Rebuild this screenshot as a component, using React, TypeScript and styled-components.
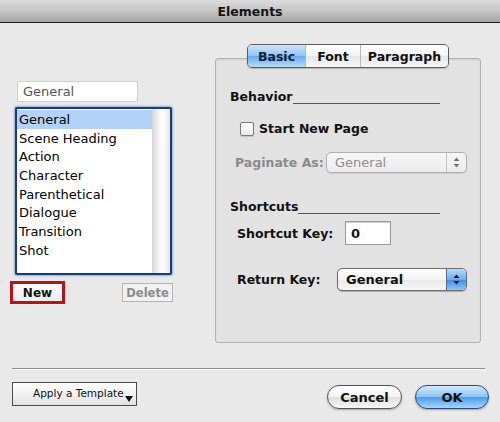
import styled, { createGlobalStyle, css } from 'styled-components'

const GlobalStyle = createGlobalStyle`
  html, body {
    margin: 0;
    padding: 0;
  }

  body {
    background: #e9e9e9;
    font-family: 'DejaVu Sans', 'Liberation Sans', sans-serif;
    color: #111;
  }
`

const Window = styled.div`
  width: 500px;
  height: 422px;
  display: flex;
  flex-direction: column;
  background: #e9e9e9;
  overflow: hidden;
`

const TitleBar = styled.div`
  flex: none;
  height: 22px;
  display: flex;
  align-items: center;
  justify-content: center;
  background: linear-gradient(#dcdcdc, #c4c4c4 50%, #a6a6a6);
  border-bottom: 1px solid #1c1c1c;
  font-size: 12.5px;
  font-weight: bold;
  color: #141414;
`

const Main = styled.div`
  flex: none;
  height: 345px;
  display: flex;
  align-items: flex-start;
`

const LeftColumn = styled.div`
  width: 163px;
  margin-left: 10px;
  padding-top: 58px;
  display: flex;
  flex-direction: column;
`

const NameField = styled.div`
  box-sizing: border-box;
  width: 121px;
  height: 21px;
  margin-left: 7px;
  padding-left: 5px;
  display: flex;
  align-items: center;
  background: #fff;
  border: 1px solid #d0d0d0;
  font-size: 13px;
  color: #555;
`

const List = styled.div`
  box-sizing: border-box;
  width: 157px;
  height: 168px;
  margin: 5px 0 0 5px;
  display: flex;
  background: #fff;
  border: 2px solid #1d3b72;
  border-radius: 2px;
  box-shadow: 0 0 2px 1px #8fb1dc;
`

const ListItems = styled.div`
  flex: 1;
  padding-top: 1px;
  display: flex;
  flex-direction: column;
`

const ListRow = styled.div<{ $selected?: boolean }>`
  height: 18.7px;
  padding-left: 2px;
  display: flex;
  align-items: center;
  font-size: 13px;
  color: #000;
  background: ${(p) => (p.$selected ? '#b3d2f7' : 'transparent')};
`

const ScrollTrack = styled.div`
  width: 18px;
  background: linear-gradient(90deg, #d6d6d6, #f2f2f2 35%, #ffffff 60%, #e6e6e6);
`

const ListButtons = styled.div`
  margin-top: 6px;
  display: flex;
  align-items: center;
  justify-content: space-between;
`

const NewButton = styled.button`
  box-sizing: border-box;
  width: 55px;
  height: 23px;
  padding: 0;
  border: 3px solid #b1161f;
  background: linear-gradient(#ffffff, #ececec);
  font-family: inherit;
  font-size: 12px;
  font-weight: bold;
  color: #111;
`

const DeleteButton = styled.button`
  box-sizing: border-box;
  width: 51px;
  height: 19px;
  padding: 0;
  border: 1px solid #b4b4b4;
  background: #f1f1f1;
  font-family: inherit;
  font-size: 11.5px;
  font-weight: bold;
  color: #8c8c8c;
`

const GroupBox = styled.div`
  box-sizing: border-box;
  width: 266px;
  height: 285px;
  margin: 35px 0 0 42px;
  display: flex;
  flex-direction: column;
  background: #e2e2e2;
  border: 1px solid #b2b2b2;
  border-radius: 3px;
  box-shadow: inset 0 1px 2px rgba(0, 0, 0, 0.08);
`

const Tabs = styled.div`
  align-self: center;
  margin-top: -15px;
  display: flex;
  height: 22px;
  border: 1px solid #5c5c5c;
  border-radius: 5px;
  overflow: hidden;
  box-shadow: 0 1px 1px rgba(0, 0, 0, 0.2);
`

const Tab = styled.div<{ $width: number; $active?: boolean }>`
  box-sizing: border-box;
  width: ${(p) => p.$width}px;
  display: flex;
  align-items: center;
  justify-content: center;
  font-size: 12.5px;
  font-weight: bold;
  color: #111;
  background: linear-gradient(#ffffff, #f3f3f3 50%, #e6e6e6 51%, #f7f7f7);

  & + & {
    border-left: 1px solid #b8b8b8;
  }

  ${(p) =>
    p.$active &&
    css`
      color: #0d1e3a;
      background: linear-gradient(#cfe5fc, #92c2f2 50%, #6aa9ec 51%, #b5dcfb);
    `}
`

const SectionHeader = styled.div<{ $top: number }>`
  height: 16px;
  margin: ${(p) => p.$top}px 40px 0 14px;
  display: flex;
  align-items: flex-end;
`

const SectionLabel = styled.span`
  font-size: 12.5px;
  font-weight: bold;
  line-height: 16px;
`

const Rule = styled.div`
  flex: 1;
  height: 0;
  border-bottom: 1px solid #555;
  margin-bottom: 1px;
`

const Row = styled.div<{ $top: number; $indent: number }>`
  margin: ${(p) => p.$top}px 0 0 ${(p) => p.$indent}px;
  display: flex;
  align-items: center;
`

const Label = styled.span<{ $width?: number; $muted?: boolean }>`
  ${(p) => p.$width !== undefined && `width: ${p.$width}px;`}
  flex: none;
  font-size: 12.5px;
  font-weight: bold;
  color: ${(p) => (p.$muted ? '#8a8a8a' : '#111')};
`

const CheckBox = styled.span`
  box-sizing: border-box;
  width: 14px;
  height: 14px;
  margin-right: 5px;
  border: 1px solid #7a7a7a;
  border-radius: 2px;
  background: linear-gradient(#ffffff, #e8e8e8);
  box-shadow: 0 1px 1px rgba(0, 0, 0, 0.15);
`

const PopUp = styled.div<{ $width: number; $height: number; $active?: boolean }>`
  box-sizing: border-box;
  width: ${(p) => p.$width}px;
  height: ${(p) => p.$height}px;
  display: flex;
  border: 1px solid ${(p) => (p.$active ? '#6d6d6d' : '#b0b0b0')};
  border-radius: 5px;
  overflow: hidden;
  background: ${(p) =>
    p.$active
      ? 'linear-gradient(#ffffff, #f4f4f4 50%, #e9e9e9 51%, #f6f6f6)'
      : 'linear-gradient(#f6f6f6, #ececec)'};
  box-shadow: 0 1px 1px rgba(0, 0, 0, ${(p) => (p.$active ? 0.25 : 0.1)});
`

const PopUpText = styled.span<{ $active?: boolean }>`
  flex: 1;
  padding-left: 8px;
  display: flex;
  align-items: center;
  font-size: 13px;
  font-weight: ${(p) => (p.$active ? 'bold' : 'normal')};
  color: ${(p) => (p.$active ? '#111' : '#8d8d8d')};
`

const PopUpArrows = styled.span<{ $active?: boolean }>`
  width: 19px;
  display: flex;
  align-items: center;
  justify-content: center;
  border-left: 1px solid ${(p) => (p.$active ? '#4a6e9e' : '#c4c4c4')};
  background: ${(p) =>
    p.$active ? 'linear-gradient(#b9dafb, #6fadee 50%, #3d8be2 51%, #8cc6f8)' : 'transparent'};
`

const KeyField = styled.div`
  box-sizing: border-box;
  width: 46px;
  height: 24px;
  padding-left: 5px;
  display: flex;
  align-items: center;
  background: #fff;
  border: 1px solid #9a9a9a;
  box-shadow: inset 0 1px 1px rgba(0, 0, 0, 0.2);
  font-size: 13px;
  font-weight: bold;
`

const Separator = styled.div`
  height: 1px;
  margin: 0 15px 0 12px;
  background: #8e8e8e;
  border-bottom: 1px solid #f7f7f7;
`

const Footer = styled.div`
  margin-top: 12px;
  padding: 0 11px 0 12px;
  display: flex;
  align-items: flex-start;
`

const TemplateButton = styled.div`
  box-sizing: border-box;
  width: 125px;
  height: 24px;
  padding: 0 3px 3px 20px;
  display: flex;
  align-items: center;
  justify-content: space-between;
  border: 1px solid #4a4a4a;
  background: linear-gradient(#ffffff, #f1f1f1 50%, #e2e2e2);
  font-size: 10.5px;
  color: #111;

  svg {
    align-self: flex-end;
  }
`

const Spacer = styled.div`
  flex: 1;
`

const PillButton = styled.button<{ $width: number; $primary?: boolean }>`
  box-sizing: border-box;
  width: ${(p) => p.$width}px;
  height: 24px;
  margin-top: 3px;
  padding: 0;
  border-radius: 12px;
  border: 1px solid ${(p) => (p.$primary ? '#2a4a7d' : '#555')};
  background: ${(p) =>
    p.$primary
      ? 'linear-gradient(#d3e8fd, #8ec3f4 48%, #4f9be9 52%, #a6d6fc)'
      : 'linear-gradient(#ffffff, #f3f3f3 48%, #dedede 52%, #f7f7f7)'};
  box-shadow: 0 1px 2px rgba(0, 0, 0, 0.3);
  font-family: inherit;
  font-size: 13px;
  font-weight: bold;
  color: #111;

  & + & {
    margin-left: 13px;
  }
`

function Arrows({ color }: { color: string }) {
  return (
    <svg width="7" height="11" viewBox="0 0 7 11">
      <path d="M3.5 0.5 L6.5 4 L0.5 4 Z" fill={color} />
      <path d="M0.5 7 L6.5 7 L3.5 10.5 Z" fill={color} />
    </svg>
  )
}

const elements = [
  'General',
  'Scene Heading',
  'Action',
  'Character',
  'Parenthetical',
  'Dialogue',
  'Transition',
  'Shot',
]

export default function App() {
  return (
    <>
      <GlobalStyle />
      <Window>
        <TitleBar>Elements</TitleBar>

        <Main>
          <LeftColumn>
            <NameField>General</NameField>
            <List>
              <ListItems>
                {elements.map((name, i) => (
                  <ListRow key={name} $selected={i === 0}>
                    {name}
                  </ListRow>
                ))}
              </ListItems>
              <ScrollTrack />
            </List>
            <ListButtons>
              <NewButton>New</NewButton>
              <DeleteButton>Delete</DeleteButton>
            </ListButtons>
          </LeftColumn>

          <GroupBox>
            <Tabs>
              <Tab $width={57} $active>
                Basic
              </Tab>
              <Tab $width={55}>Font</Tab>
              <Tab $width={88}>Paragraph</Tab>
            </Tabs>

            <SectionHeader $top={21}>
              <SectionLabel>Behavior</SectionLabel>
              <Rule />
            </SectionHeader>

            <Row $top={16} $indent={24}>
              <CheckBox />
              <Label>Start New Page</Label>
            </Row>

            <Row $top={16} $indent={19}>
              <Label $width={91} $muted>
                Paginate As:
              </Label>
              <PopUp $width={141} $height={21}>
                <PopUpText>General</PopUpText>
                <PopUpArrows>
                  <Arrows color="#777" />
                </PopUpArrows>
              </PopUp>
            </Row>

            <SectionHeader $top={26}>
              <SectionLabel>Shortcuts</SectionLabel>
              <Rule />
            </SectionHeader>

            <Row $top={6} $indent={21}>
              <Label $width={108}>Shortcut Key:</Label>
              <KeyField>0</KeyField>
            </Row>

            <Row $top={23} $indent={21}>
              <Label $width={100}>Return Key:</Label>
              <PopUp $width={130} $height={23} $active>
                <PopUpText $active>General</PopUpText>
                <PopUpArrows $active>
                  <Arrows color="#0c1c38" />
                </PopUpArrows>
              </PopUp>
            </Row>
          </GroupBox>
        </Main>

        <Separator />

        <Footer>
          <TemplateButton>
            <span>Apply a Template</span>
            <svg width="8" height="6" viewBox="0 0 8 6">
              <path d="M0 0 L8 0 L4 6 Z" fill="#111" />
            </svg>
          </TemplateButton>
          <Spacer />
          <PillButton $width={75}>Cancel</PillButton>
          <PillButton $width={74} $primary>
            OK
          </PillButton>
        </Footer>
      </Window>
    </>
  )
}
